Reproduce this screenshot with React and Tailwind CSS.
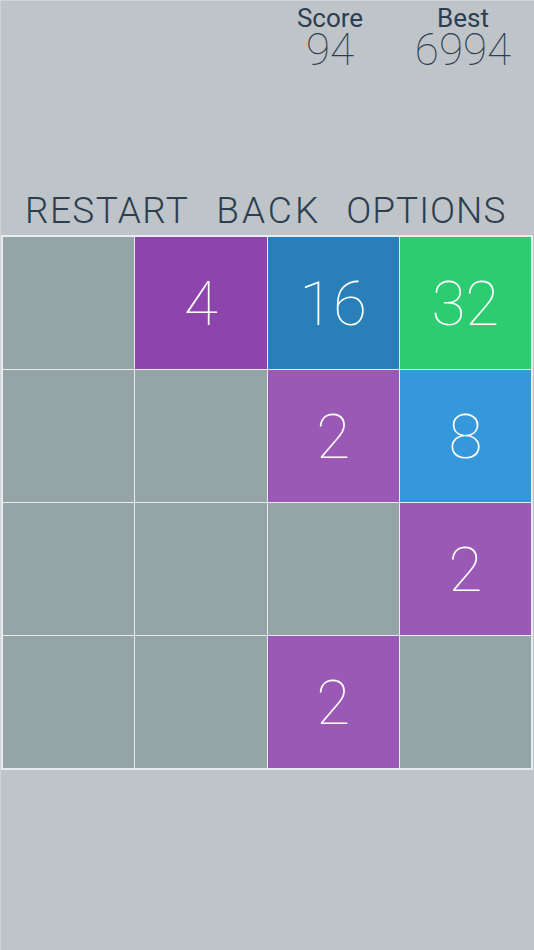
const tiles = [
  null, 4, 16, 32,
  null, null, 2, 8,
  null, null, null, 2,
  null, null, 2, null,
];

const colors = {
  2: 'bg-[#9b59b6]',
  4: 'bg-[#8e44ad]',
  8: 'bg-[#3498db]',
  16: 'bg-[#2980b9]',
  32: 'bg-[#2ecc71]',
};

const font = { fontFamily: '"Helvetica Neue", Roboto, "Liberation Sans", sans-serif' };

export default function App() {
  return (
    <div className="w-[534px] h-[950px] bg-[#bfc4c8] border-t border-l border-[#d0d4d7] text-[#2c3e50]" style={font}>
      <div className="flex justify-end pr-[16px]">
        <div className="w-[90px] flex flex-col items-center mr-[33px]">
          <div className="text-[26px] leading-[26px] mt-[4px]">Score</div>
          <div className="text-[44px] leading-[38px] font-thin">94</div>
        </div>
        <div className="w-[110px] flex flex-col items-center">
          <div className="text-[26px] leading-[26px] mt-[4px]">Best</div>
          <div className="text-[44px] leading-[38px] font-thin">6994</div>
        </div>
      </div>
      <div className="flex mt-[120px] pl-[24px] text-[37px] leading-[44px] font-light tracking-[1.4px]">
        <span>RESTART</span>
        <span className="ml-[27px] tracking-[3px]">BACK</span>
        <span className="ml-[25px] tracking-[1px]">OPTIONS</span>
      </div>
      <div className="mt-[2px] w-[532px] bg-[#e8ecee] p-[2px] grid grid-cols-4 gap-[1px]">
        {tiles.map((v, i) => (
          <div
            key={i}
            className={`h-[132px] flex items-center justify-center text-white text-[62px] font-thin ${v ? colors[v] : 'bg-[#95a5a6]'}`}
          >
            {v}
          </div>
        ))}
      </div>
    </div>
  );
}
